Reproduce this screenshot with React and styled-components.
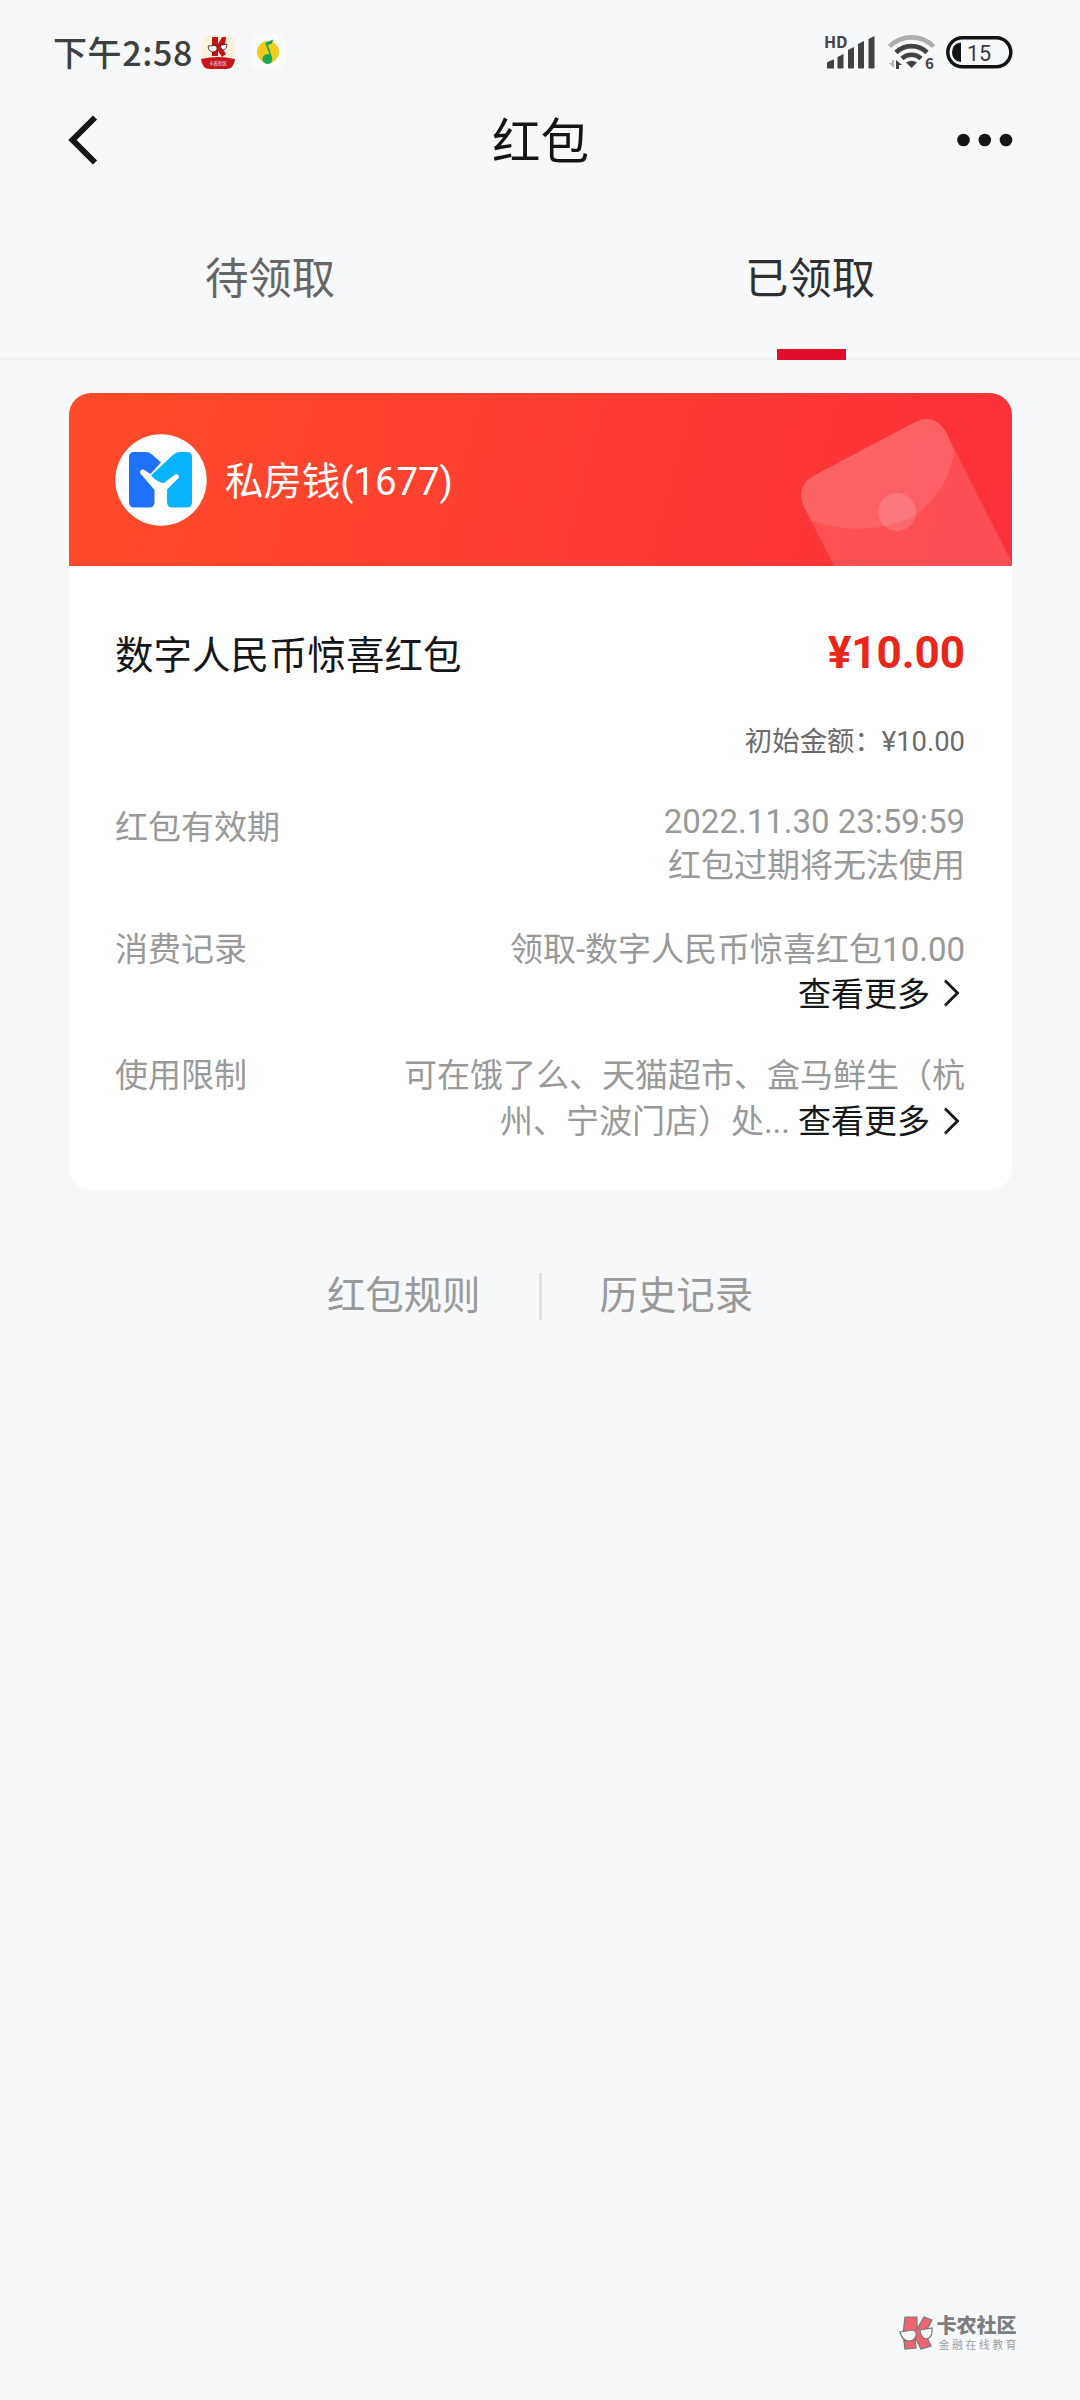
import React from "react"
import styled, { createGlobalStyle } from "styled-components"

const GlobalStyle = createGlobalStyle`
  * { box-sizing: border-box; }
  body {
    margin: 0;
    background: #f7f8fa;
    font-family: Roboto, "Noto Sans CJK SC", sans-serif;
  }
  svg { overflow: visible; }
`

const Page = styled.div`
  width: 1080px;
  height: 2400px;
  display: flex;
  flex-direction: column;
  background: #f7f8fa;
  overflow: hidden;
`

/* STATUS BAR */
const StatusBar = styled.div`
  height: 88px;
  padding: 16px 67px 0 53px;
  display: flex;
  align-items: center;
  justify-content: space-between;
`

const StatusGroup = styled.div`
  display: flex;
  align-items: center;
  gap: ${props => props.$gap || 0}px;
`

const Clock = styled.span`
  width: 148px;
  font-family: "Noto Sans CJK SC", sans-serif;
  font-size: 34px;
  font-weight: 500;
  line-height: 40px;
  letter-spacing: 0.6px;
  color: #3e3f40;
  white-space: nowrap;
`

/* NAV + TABS */
const NavBar = styled.div`
  height: 104px;
  padding: 0 67px 0 68px;
  display: grid;
  grid-template-columns: 1fr auto 1fr;
  align-items: center;

  svg:last-child { justify-self: end; }
`

const NavTitle = styled.h1`
  margin: 0;
  padding-top: 5px;
  font-size: 48.5px;
  font-weight: 400;
  line-height: 64px;
  color: #141516;
`

const Tabs = styled.div`
  height: 168px;
  display: flex;
  box-shadow: inset 0 -2px 0 #eff0f2;
`

const Tab = styled.div`
  flex: 1;
  padding-top: 58px;
  display: flex;
  flex-direction: column;
  align-items: center;
  justify-content: space-between;
  font-size: 43.4px;
  line-height: 60px;
  color: ${props => (props.$active ? "#2f3031" : "#666")};

  &::after {
    content: "";
    width: 69px;
    height: 11px;
    margin-left: 2px;
    background: ${props => (props.$active ? "#e10d2b" : "transparent")};
  }
`

/* CARD */
const Card = styled.section`
  height: 797px;
  margin: 33px 68px 0 69px;
  border-radius: 22px;
  background: #fff;
  overflow: hidden;
`

const CardHeader = styled.div`
  height: 173px;
  padding-left: 46px;
  display: flex;
  align-items: center;
  background: linear-gradient(105deg, #ff4b29 0%, #fd3d33 55%, #fb3039 100%);

  > svg:last-child { margin-left: auto; }
`

const WalletName = styled.span`
  margin-left: 18px;
  padding-top: 4px;
  font-size: 38.4px;
  line-height: 48px;
  color: #fff;
`

const CardBody = styled.div`
  padding: 59px 47px 0 46px;
`

const TitleRow = styled.div`
  display: flex;
  justify-content: space-between;
  align-items: center;
  height: 54px;
`

const PacketTitle = styled.span`
  padding-bottom: 1px;
  font-size: 38.5px;
  color: #161718;
`

const Price = styled.span`
  padding-top: 2px;
  font-size: 44px;
  font-weight: 700;
  color: #e8261a;
`

const InitialAmount = styled.div`
  margin-top: 43px;
  font-size: 27.4px;
  line-height: 40px;
  text-align: right;
  color: #6b6b6b;
`

const InfoRow = styled.div`
  display: flex;
  justify-content: space-between;
  margin-top: ${props => props.$gap}px;
  font-size: 33px;
  line-height: ${props => props.$line}px;
  color: #999;
`

const InfoLabel = styled.span`
  padding-top: ${props => props.$drop || 0}px;
`

const InfoValue = styled.div`
  display: flex;
  flex-direction: column;
  align-items: flex-end;
  white-space: nowrap;
`

const ValueLine = styled.span`
  display: flex;
  align-items: center;
`

const MoreLink = styled.a`
  margin-left: 8px;
  display: flex;
  align-items: center;
  color: #161718;

  svg { margin: 0 5px 3px 13px; }
`

/* BOTTOM LINKS */
const FooterLinks = styled.div`
  margin-top: 72px;
  height: 68px;
  display: flex;
  align-items: center;
  justify-content: center;
  font-size: 38.4px;
  line-height: 48px;
  color: #999;
`

const Divider = styled.i`
  width: 3px;
  height: 47px;
  margin: 0 58px;
  background: #dfe0e2;
`

const Watermark = styled.div`
  margin: auto 61px 48px auto;
  display: flex;
  align-items: center;
  gap: 4px;
`

const WatermarkText = styled.div`
  display: flex;
  flex-direction: column;
  font-family: "Noto Sans CJK SC", sans-serif;

  strong {
    font-size: 20px;
    font-weight: 900;
    line-height: 22px;
    color: #7c7d7f;
  }

  span {
    padding-left: 2px;
    font-size: 11px;
    line-height: 16px;
    letter-spacing: 2.4px;
    color: #a0a1a3;
  }
`

const KMark = () => (
  <svg width="34" height="34" viewBox="0 0 34 34">
    <path d="M6 1h12v12L25 1l8 3-7 13 6 13-10 3-6-12 1 11-11 1-2-15z" fill="#ee6470" stroke="#77787a" strokeWidth="1.2" />
    <path d="M1 16l13-2q4 1 3 6-2 5-7 5-7 0-9-9zM21 14l12-2q1 9-5 11-6 0-7-9z" fill="#f7f8fa" stroke="#77787a" strokeWidth="1.2" />
  </svg>
)

const Signal = () => (
  <svg width="54" height="34" viewBox="0 0 54 34">
    <text x="0" y="13" fontFamily="Noto Sans CJK SC, sans-serif" fontSize="16" fontWeight="700" fill="#414243">HD</text>
    <g fill="#414243">
      <path d="M3 27.500l6-3q1 0 1 1v8H4q-1 0-1-1z" />
      <path d="M13.500 22l6-3v13.500q0 1-1 1h-4q-1 0-1-1z" />
      <path d="M24 15l6-3v20.500q0 1-1 1h-4q-1 0-1-1z" />
      <path d="M34 9l6-3v26.500q0 1-1 1h-4q-1 0-1-1z" />
      <path d="M44.500 4l6-3v31.500q0 1-1 1h-4q-1 0-1-1z" />
    </g>
  </svg>
)

const Wifi = () => (
  <svg width="48" height="36" viewBox="0 0 48 36">
    <g fill="none" strokeWidth="4.6">
      <path d="M1.500 12.500a31 31 0 0 1 44 0" stroke="#adaeb0" />
      <path d="M8 18.500a22 22 0 0 1 31 0" stroke="#414243" />
      <path d="M14 24.500a14 14 0 0 1 19 0" stroke="#414243" />
    </g>
    <path d="M18 28.500q5.500-3.500 11 0L23.500 34z" fill="#414243" />
    <path d="M6 26v8L1 29h3v-3z" fill="#b5b6b8" />
    <path d="M8 35v-9l6 5h-3v4z" fill="#414243" />
    <text x="37" y="35" fontFamily="Noto Sans CJK SC, sans-serif" fontSize="15" fontWeight="700" fill="#414243">6</text>
  </svg>
)

const Battery = () => (
  <svg width="67" height="33" viewBox="0 0 67 33">
    <rect x="1.800" y="1.800" width="63" height="29" rx="14.500" fill="none" stroke="#131415" strokeWidth="3.500" />
    <path d="M15 6.500v19.500q-9-1-9-9.700t9-9.800z" fill="#131415" />
    <text x="21" y="24.500" fontFamily="Roboto, sans-serif" fontSize="21.500" fill="#37383a">15</text>
  </svg>
)

const WalletLogo = () => (
  <svg width="92" height="92" viewBox="0 0 92 92">
    <circle cx="46" cy="46" r="45.700" fill="#fff" />
    <path d="M19 18h12q3 0 5.500 2L46 28.500 35.500 40l-7-4.500q-4 0-3.500 3.500l14.500 17V68q0 5.500-5.500 5.500H19.500q-5.500 0-5.500-5.500V23.500Q14 18 19 18z" fill="#1f70fb" />
    <path d="M59 20q3-2 6-2h7q5 0 5 5.500V68q0 5.500-5.500 5.500H57.500q-5.500 0-5.500-5.500V55.500l12-12q0-4-4-3L49 49q-6 0-13-7.500z" fill="#05b4fd" />
  </svg>
)

const Envelope = () => (
  <svg width="214" height="173" viewBox="0 0 214 173">
    <g fill="#fff">
      <path d="M17 82L119 28Q138 21 148 39L214 170V173H36L5 112Q-2 92 17 82z" opacity="0.140" />
      <path d="M17 82L119 28Q138 21 148 39L156 58C153 83 140 104 119 121C89 139 46 140 13 127L5 112Q-2 92 17 82z" opacity="0.100" />
      <circle cx="99" cy="119" r="19" opacity="0.150" />
    </g>
  </svg>
)

const Chevron = () => (
  <svg width="17" height="28" viewBox="0 0 17 28">
    <path d="M2 1.500l12.500 12.500L2 26.500" fill="none" stroke="#161718" strokeWidth="2.800" />
  </svg>
)

const More = () => (
  <MoreLink>
    查看更多
    <Chevron />
  </MoreLink>
)

function App() {
  return (
    <Page>
      <GlobalStyle />

      <StatusBar>
        <StatusGroup>
          <Clock>下午2:58</Clock>
          <StatusGroup $gap={15}>
            <svg width="34" height="34" viewBox="0 0 34 34">
              <rect width="34" height="34" rx="8" fill="#fbf1dc" />
              <path d="M11 2h6v7l4-7h4l-1 8-3 3 4 6-4 3-4-6v5h-6z" fill="#c71318" />
              <path d="M7 11l7-.5q3 1 2 4-2 3-5 2.500-4-1-4-6zM19 10.500l7-1.500q0 5-3 6-3 0-4-4.500z" fill="#fff" stroke="#2b1515" strokeWidth=".8" />
              <path d="M0 24q17-4 34 0-1 10-9 10H9q-8 0-9-10z" fill="#c4161b" />
              <text x="17" y="30" textAnchor="middle" fontFamily="Noto Sans CJK SC, sans-serif" fontSize="4.500" fill="#fff">卡农社区</text>
            </svg>
            <svg width="36" height="36" viewBox="0 0 36 36">
              <rect width="36" height="36" rx="9" fill="#fafbfc" />
              <circle cx="18" cy="18" r="11" fill="#f5cb1b" />
              <path d="M15 9l8-3.500-1 4-4 1.500 4 12a5 5 0 1 1-2.500-2.500l-3.500-9.500z" fill="#15a557" />
            </svg>
          </StatusGroup>
        </StatusGroup>
        <StatusGroup $gap={10}>
          <Signal />
          <Wifi />
          <Battery />
        </StatusGroup>
      </StatusBar>

      <NavBar>
        <svg width="31" height="50" viewBox="0 0 31 50">
          <path d="M27 2.500L4.500 25 27 47.500" fill="none" stroke="#141516" strokeWidth="6" />
        </svg>
        <NavTitle>红包</NavTitle>
        <svg width="56" height="14" viewBox="0 0 56 14" fill="#141516">
          <circle cx="6.500" cy="7" r="6.300" />
          <circle cx="27.800" cy="7" r="6.300" />
          <circle cx="49" cy="7" r="6.300" />
        </svg>
      </NavBar>

      <Tabs>
        <Tab>待领取</Tab>
        <Tab $active>已领取</Tab>
      </Tabs>

      <Card>
        <CardHeader>
          <WalletLogo />
          <WalletName>私房钱(1677)</WalletName>
          <Envelope />
        </CardHeader>
        <CardBody>
          <TitleRow>
            <PacketTitle>数字人民币惊喜红包</PacketTitle>
            <Price>¥10.00</Price>
          </TitleRow>
          <InitialAmount>初始金额：¥10.00</InitialAmount>

          <InfoRow $gap={38} $line={44}>
            <InfoLabel $drop={6}>红包有效期</InfoLabel>
            <InfoValue>
              <ValueLine>2022.11.30 23:59:59</ValueLine>
              <ValueLine>红包过期将无法使用</ValueLine>
            </InfoValue>
          </InfoRow>

          <InfoRow $gap={39} $line={45}>
            <InfoLabel>消费记录</InfoLabel>
            <InfoValue>
              <ValueLine>领取-数字人民币惊喜红包10.00</ValueLine>
              <More />
            </InfoValue>
          </InfoRow>

          <InfoRow $gap={36} $line={46}>
            <InfoLabel>使用限制</InfoLabel>
            <InfoValue>
              <ValueLine>可在饿了么、天猫超市、盒马鲜生（杭</ValueLine>
              <ValueLine>
                州、宁波门店）处...
                <More />
              </ValueLine>
            </InfoValue>
          </InfoRow>
        </CardBody>
      </Card>

      <FooterLinks>
        <span>红包规则</span>
        <Divider />
        <span>历史记录</span>
      </FooterLinks>

      <Watermark>
        <KMark />
        <WatermarkText>
          <strong>卡农社区</strong>
          <span>金融在线教育</span>
        </WatermarkText>
      </Watermark>
    </Page>
  )
}

export default App
